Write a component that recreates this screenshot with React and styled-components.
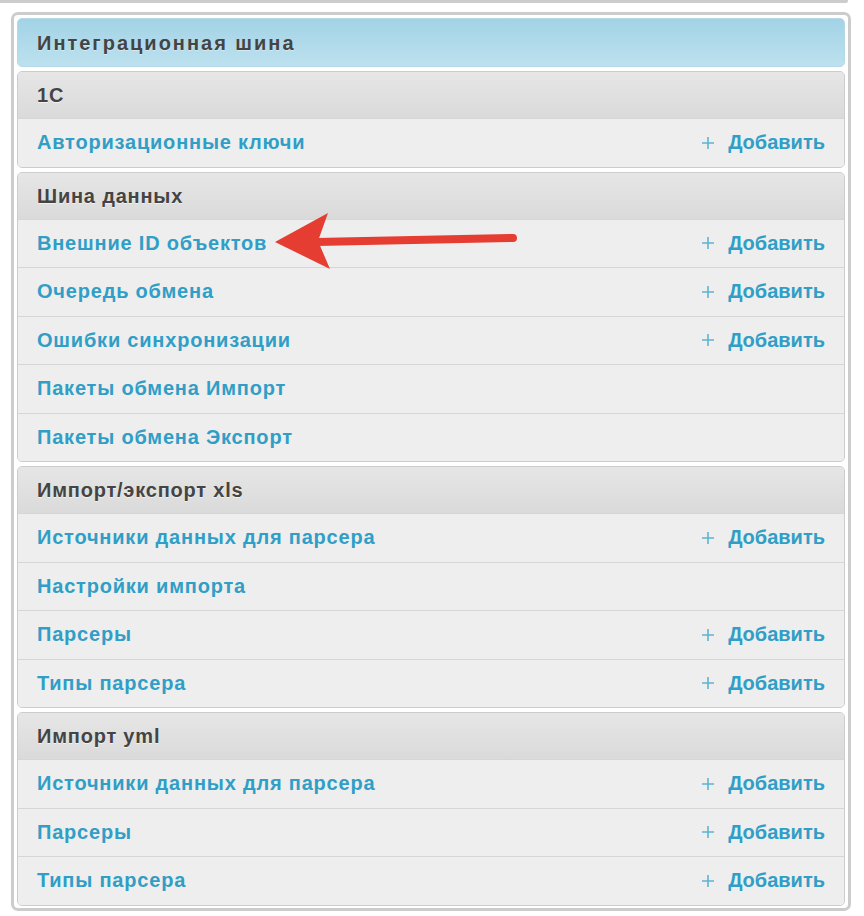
import styled, { createGlobalStyle } from 'styled-components';

const GlobalStyle = createGlobalStyle`
  html, body {
    margin: 0;
    padding: 0;
    background: #fff;
  }
  body {
    font-family: 'Liberation Sans', Arial, sans-serif;
  }
`;

const Page = styled.div`
  position: relative;
  width: 864px;
  height: 916px;
  overflow: hidden;
`;

const PrevBox = styled.div`
  margin-left: -10px;
  width: 852px;
  height: 0;
  border: 3px solid #ccc;
  border-top: none;
  border-radius: 0 0 7px 7px;
`;

const Outer = styled.div`
  margin: 9px 0 0 11px;
  width: 828px;
  border: 3px solid #ccc;
  border-radius: 7px;
  padding: 3px 3px 2px 3px;
  display: flex;
  flex-direction: column;
  gap: 4px;
`;

const MainHeader = styled.div`
  height: 46px;
  padding: 1px 19px 0;
  display: flex;
  align-items: center;
  border: 1px solid #b4d9e8;
  border-radius: 5px;
  background: linear-gradient(to bottom, #a2d3e6, #bde1ee);
  color: #444;
  font-size: 20px;
  font-weight: bold;
  letter-spacing: 2px;
  text-shadow: 0 1px 0 rgba(255, 255, 255, 0.4);
`;

const Module = styled.div`
  border: 1px solid #ccc;
  border-radius: 5px;
  overflow: hidden;
  background: #eee;
`;

const SectionHeader = styled.div`
  height: 45px;
  padding: 1px 19px 0;
  display: flex;
  align-items: center;
  background: linear-gradient(to bottom, #e6e6e6, #dadada);
  color: #444;
  font-size: 20px;
  font-weight: bold;
  letter-spacing: 0.8px;
  text-shadow: 0 1px 0 rgba(255, 255, 255, 0.6);
`;

const Row = styled.div`
  height: 47.5px;
  padding: 0 19px;
  display: flex;
  align-items: center;
  justify-content: space-between;
  border-top: 1px solid #d6d6d6;
  background: #eee;
`;

const Link = styled.span`
  color: #309ec6;
  font-size: 20px;
  font-weight: bold;
  letter-spacing: 0.8px;
`;

const AddLink = styled.span`
  display: flex;
  align-items: center;
  gap: 13px;
  color: #309ec6;
  font-size: 20px;
  font-weight: bold;
`;

const Arrow = styled.svg`
  position: absolute;
  left: 0;
  top: 0;
  pointer-events: none;
`;

const PlusIcon = () => (
  <svg width="14" height="14" viewBox="0 0 14 14">
    <path d="M7 1v12M1 7h12" stroke="#5cb4d4" strokeWidth="1.6" />
  </svg>
);

const sections = [
  { title: '1C', rows: [{ name: 'Авторизационные ключи', add: true }] },
  {
    title: 'Шина данных',
    rows: [
      { name: 'Внешние ID объектов', add: true },
      { name: 'Очередь обмена', add: true },
      { name: 'Ошибки синхронизации', add: true },
      { name: 'Пакеты обмена Импорт' },
      { name: 'Пакеты обмена Экспорт' },
    ],
  },
  {
    title: 'Импорт/экспорт xls',
    rows: [
      { name: 'Источники данных для парсера', add: true },
      { name: 'Настройки импорта' },
      { name: 'Парсеры', add: true },
      { name: 'Типы парсера', add: true },
    ],
  },
  {
    title: 'Импорт yml',
    rows: [
      { name: 'Источники данных для парсера', add: true },
      { name: 'Парсеры', add: true },
      { name: 'Типы парсера', add: true },
    ],
  },
];

export default function App() {
  return (
    <Page>
      <GlobalStyle />
      <PrevBox />
      <Outer>
        <MainHeader>Интеграционная шина</MainHeader>
        {sections.map((s) => (
          <Module key={s.title}>
            <SectionHeader>{s.title}</SectionHeader>
            {s.rows.map((r) => (
              <Row key={r.name}>
                <Link>{r.name}</Link>
                {r.add && (
                  <AddLink>
                    <PlusIcon />
                    Добавить
                  </AddLink>
                )}
              </Row>
            ))}
          </Module>
        ))}
      </Outer>
      <Arrow width="864" height="916">
        <line x1="513" y1="238" x2="316" y2="242" stroke="#e53d31" strokeWidth="8" strokeLinecap="round" />
        <polygon points="275,242 328,213 318,241 330,269" fill="#e53d31" />
      </Arrow>
    </Page>
  );
}
